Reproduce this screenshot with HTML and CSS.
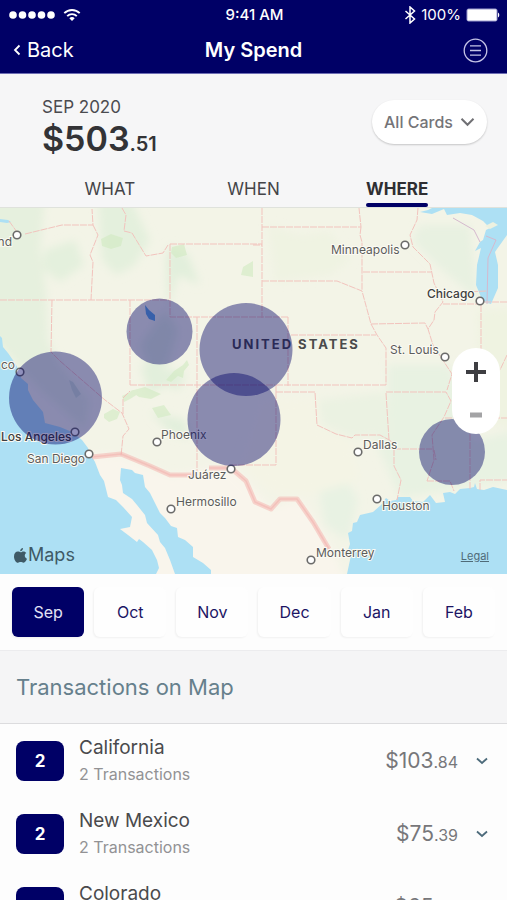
FILE: index.html
```html
<!DOCTYPE html>
<html lang="en">
<head>
<meta charset="utf-8">
<meta name="viewport" content="width=device-width, initial-scale=1">
<title>My Spend</title>
<link rel="stylesheet" href="styles.css">
</head>
<body>
<div class="app">
  <header class="top">
    <div class="status">
      <div class="status-left">
        <svg width="46" height="8" viewBox="0 0 46 8" aria-hidden="true"><g fill="#fff"><circle cx="4" cy="4" r="3.8"/><circle cx="13.500" cy="4" r="3.8"/><circle cx="23" cy="4" r="3.8"/><circle cx="32.500" cy="4" r="3.8"/><circle cx="42" cy="4" r="3.8"/></g></svg>
        <svg width="18" height="14" viewBox="0 0 18 14" aria-hidden="true"><g fill="none" stroke="#fff" stroke-width="1.9"><path d="M1.300 5.200a10.800 10.800 0 0 1 15.400 0"/><path d="M4.200 8.200a6.700 6.700 0 0 1 9.600 0"/></g><path d="M6.300 10.200a3.900 3.900 0 0 1 5.400 0L9 13z" fill="#fff"/></svg>
      </div>
      <span class="time">9:41 AM</span>
      <div class="status-right">
        <svg width="12" height="18" viewBox="0 0 12 18" aria-hidden="true"><path d="M1.500 5l9 8L6 17V1l4.500 4-9 8" fill="none" stroke="#fff" stroke-width="1.500"/></svg>
        <span>100%</span>
        <svg width="34" height="14" viewBox="0 0 34 14" aria-hidden="true"><rect x="1" y="1" width="30" height="12" rx="1.500" fill="#fff" stroke="#9c9cce" stroke-width="1"/><path d="M32 4.500a3 3 0 0 1 0 5z" fill="#fff"/></svg>
      </div>
    </div>
    <nav class="navbar">
      <button class="back" type="button"><svg width="8" height="12" viewBox="0 0 8 12" aria-hidden="true"><path d="M6.500 1.500L2 6l4.500 4.500" fill="none" stroke="#fff" stroke-width="1.800"/></svg>Back</button>
      <h1>My Spend</h1>
      <button class="menu" type="button" aria-label="Menu"><svg width="25" height="25" viewBox="0 0 25 25" aria-hidden="true"><g fill="none" stroke="#c4c3e6" stroke-width="1.300"><circle cx="12.500" cy="12.500" r="11.300"/><path d="M7 7.800h11M7 12.500h11M7 17.200h11"/></g></svg></button>
    </nav>
  </header>

  <section class="summary">
    <div class="summary-row">
      <div>
        <div class="period">SEP 2020</div>
        <div class="total">$503<small>.51</small></div>
      </div>
      <div class="cards">
        <select aria-label="Cards"><option>All Cards</option></select>
        <svg width="15" height="10" viewBox="0 0 15 10" aria-hidden="true"><path d="M1.500 1.800l6 6 6-6" fill="none" stroke="#707074" stroke-width="2"/></svg>
      </div>
    </div>
    <nav class="tabs">
      <button type="button">WHAT</button>
      <button type="button">WHEN</button>
      <button type="button" class="active">WHERE</button>
    </nav>
  </section>

  <section class="map">
    <svg class="map-art" viewBox="0 208 507 366" preserveAspectRatio="xMidYMid slice" role="img" aria-label="Map of spending">
      <defs>
        <filter id="soft" x="-20%" y="-20%" width="140%" height="140%"><feGaussianBlur stdDeviation="4"/></filter>
      </defs>
      <rect y="208" width="507" height="366" fill="#f3f4e7"/>
      <g filter="url(#soft)">
        <path d="M90 454L121 456L170 476L210 470L232 467L250 485L270 509L300 498L330 545L350 590H90z" fill="#f9f5ec"/>
        <path d="M-10 198H45L40 250L46 290L48 340L60 365L90 400L85 430L40 390L-10 335z" fill="#e6f0de"/>
        <path d="M45 250L75 240L84 265L60 282L42 268zM98 198H130L150 240L134 266L116 275L102 260L100 230z" fill="#e4f0dd"/>
        <path d="M170 245L188 255L200 285L178 275L168 310L166 260zM140 365L185 372L180 390L165 385L150 395zM150 412L185 420L190 438L172 434z" fill="#e2efdc"/>
        <path d="M268 225L300 235L330 232L350 260L330 275L275 282z" fill="#eff3e2"/>
        <path d="M420 225L470 225L478 300L440 268L412 240z" fill="#e8f1e1"/>
        <path d="M388 365L450 365L475 440L517 430V480L450 490L400 498L375 440L388 430z" fill="#e8f2e2"/>
        <path d="M318 400L385 392L390 435L350 437L322 425z" fill="#ebf2e2"/>
        <path d="M318 485L345 478L358 500L348 540L325 525z" fill="#e8f2e3"/>
        <path d="M140 345L165 310L178 330L168 365L150 370z" fill="#e1eedb"/>
        <path d="M478 310L517 308V430L480 420z" fill="#eff3e1"/>
        <path d="M262 400L317 398L317 425L350 438L360 480L310 495L275 495L240 465z" fill="#f4f4e5"/>
      </g>
      <g fill="#d3ebc4" opacity=".65">
        <path d="M101 239l10-5 12 4-2 8-10 3-9-3z"/><path d="M172 247l12-3 3 11-11 3-5-5z"/><path d="M243 267l10-6v16l-12-2z"/>
        <path d="M104 414l9-5 7 3-3 7-8 3-5-4z"/><path d="M122 396l12-6 4 4-8 5-6 3z"/><path d="M166 380l8-9 9-6 4-5 2 5-5 6-1 7-5-2-7 6z"/><path d="M152 408l12-3 7 10-13 3z"/><path d="M130 391l15-4 16 7-10 5-12-2z"/>
      </g>
      <g fill="#ade0f4">
        <path d="M0 336L2 338L3 347L8 353L15 363L20 372L21 378L28 384L28 390L33 400L43 412L45 423L60 427L72 432L82 440L88 448L91 455L95 462L100 475L104 481L108 497L116 500L123 507L132 517L130 527L120 529L128 535L137 542L139 539L143 542L152 550L157 560L159 568L156 574H0z"/>
        <path d="M121 468L132 470L135 473L143 475L145 487L150 493L155 503L160 513L165 518L171 526L177 528L178 537L185 540L193 547L193 557L203 563L211 570V574H175L170 560L165 548L160 542L158 535L147 523L145 515L137 505L132 499L123 493L122 485L120 480z"/>
        <path d="M347 574L350 560L352 552L348 550L350 544L348 533L352 531L353 523L357 522L360 515L373 512L381 505L386 498L390 501L396 500L398 497L410 497L413 501L423 502L430 495L436 503L445 502L443 493L450 492L455 494L460 489L470 488L474 487L475 483L477 489L484 490L493 487L507 490V574z"/>
        <path d="M420 212L428 210L432 208H507V235L497 249L495 252L498 265L498 288L491 304L483 302L476 285L477 265L481 248L475 251L480 242L483 240L486 230L490 228L483 221L472 215L460 213L447 215L444 209L432 214z"/>
        <path d="M0 219l8 1 3 2-4 1-7-1z"/>
      </g>
      <path d="M145 305l4 5 6 5v6l-6-2-3-5z" fill="#63aade"/>
      <path d="M69 380l4 2 8 12-5 4-4-8z" fill="#cfe0d2"/>
      <path d="M485 226l8-4 5 3-8 4z" fill="#edf1e0"/>
      <path d="M453 218L474 230L480 242M486 236L496 240L488 258L487 304" fill="none" stroke="#d5b9ce" stroke-width="1"/>
      <g fill="none" stroke="#f2c3bd" stroke-width="1" stroke-dasharray="7 1">
        <path d="M9 221L17 232M25 234L62 225H93L92 209M93 225L98 235L90 255L93 262L91 300M0 300H169M52 300L51 352L60 361L105 400L122 413L129 429L123 436L121 456M130 300V385M123 414V398L130 391"/>
        <path d="M122 208L126 215L124 231L132 233L146 256L163 253L168 245M170 244H262M170 244V317H288M197 317V472M130 385H275M262 208V318M253 245H262"/>
        <path d="M262 227H361L359 208M361 227L360 235L362 242V290M262 281H337L362 291L371 324L377 335L386 348V385M363 272H431M418 208L417 220L410 235L413 247L430 264L434 283L443 302L435 312L434 320L428 329L433 345L452 374L447 390M371 324L425 323L428 329M288 317V386M291 335H376M276 385H386M386 393L389 440L394 444M276 392H315L317 425L336 434L352 438L355 435L380 435L391 441M276 392V465H232M386 392H446L451 401L444 417L432 435L434 460L427 481M394 449H432M394 449V466L401 480L397 500M427 481H450L454 491M481 305V415M443 304H481M484 302H507M507 355L500 370M470 418V489M445 418H507M480 490V480H507M463 292L487 291M276 385V392M434 450L436 460"/>
      </g>
      <g fill="none" stroke="#f3a8a4" stroke-linejoin="round">
        <path d="M92 457L121 454L150 466L170 475H197M209 468H231L246 481L255 502L271 509L280 499H297L313 522L329 549" stroke-width="5" opacity=".45"/>
        <path d="M92 457L121 454L150 466L170 475H197M209 468H231L246 481L255 502L271 509L280 499H297L313 522L329 549" stroke-width="1.500" opacity=".4"/>
      </g>
      <g fill="#fff" stroke="#6b6b6a" stroke-width="1.600">
        <circle cx="17" cy="235" r="3.800"/><circle cx="20" cy="372" r="3.800"/><circle cx="75" cy="432" r="3.800"/><circle cx="89" cy="454" r="3.800"/><circle cx="157" cy="442" r="3.800"/><circle cx="231" cy="469" r="3.800"/><circle cx="171" cy="509" r="3.800"/><circle cx="358" cy="452" r="3.800"/><circle cx="377" cy="499" r="3.800"/><circle cx="311" cy="560" r="3.800"/><circle cx="405" cy="245" r="3.800"/><circle cx="480" cy="301" r="3.800"/><circle cx="445" cy="357" r="3.800"/>
      </g>
      <g class="city">
        <text x="12" y="246" text-anchor="end">nd</text>
        <text x="15" y="369" text-anchor="end">co</text>
        <text class="major" x="1" y="441">Los Angeles</text>
        <text x="27" y="463">San Diego</text>
        <text x="161" y="439">Phoenix</text>
        <text x="188" y="479">Juárez</text>
        <text x="176" y="506">Hermosillo</text>
        <text x="363" y="449">Dallas</text>
        <text x="382" y="510">Houston</text>
        <text x="316" y="557">Monterrey</text>
        <text x="331" y="254">Minneapolis</text>
        <text class="major" x="427" y="298">Chicago</text>
        <text x="390" y="354">St. Louis</text>
      </g>
      <text class="country" x="232" y="349">UNITED STATES</text>
      <g fill="#000066" fill-opacity=".43">
        <circle cx="55.500" cy="398" r="46.500"/><circle cx="159.500" cy="331.500" r="33"/><circle cx="246" cy="349.500" r="46.500"/><circle cx="234" cy="419.500" r="46.500"/><circle cx="452" cy="452" r="33"/>
      </g>
    </svg>
    <div class="zoom">
      <button type="button" aria-label="Zoom in"><svg width="20" height="20" viewBox="0 0 20 20" aria-hidden="true"><path d="M10 0v20M0 10h20" stroke="#3e3e42" stroke-width="4"/></svg></button>
      <button type="button" aria-label="Zoom out"><svg width="12" height="6" viewBox="0 0 12 6" aria-hidden="true"><path d="M0 3h12" stroke="#a3a3a5" stroke-width="5"/></svg></button>
    </div>
    <div class="brand"><svg width="13" height="15" viewBox="0 0 13 15" aria-hidden="true"><path d="M9 0c.1 1.800-1.200 3.300-2.800 3.300C6 1.600 7.500.200 9 0zM6.600 4.300c.7 0 1.500-.8 2.800-.8 1.300 0 2.300.7 2.900 1.500-2.300 1.400-1.900 4.700.7 5.700-.5 1.400-1.900 4-3.500 4.100-1.100 0-1.500-.7-2.800-.7s-1.700.7-2.800.7C2 14.800 0 11.500 0 8.400c0-3.100 1.900-4.800 3.800-4.800 1.300 0 2.100.7 2.800.7z" fill="#3f5a66"/></svg>Maps</div>
    <a class="legal" href="#legal">Legal</a>
  </section>

  <nav class="months">
    <button type="button" class="active">Sep</button>
    <button type="button">Oct</button>
    <button type="button">Nov</button>
    <button type="button">Dec</button>
    <button type="button">Jan</button>
    <button type="button">Feb</button>
  </nav>

  <h2>Transactions on Map</h2>

  <ul class="list">
    <li>
      <span class="count">2</span>
      <div class="place"><strong>California</strong><span>2 Transactions</span></div>
      <span class="amount">$103<small>.84</small></span>
      <button type="button" aria-label="Show California"><svg width="12" height="8" viewBox="0 0 12 8" aria-hidden="true"><path d="M1 1.500l5 4.500 5-4.500" fill="none" stroke="#4d6b7b" stroke-width="1.800"/></svg></button>
    </li>
    <li>
      <span class="count">2</span>
      <div class="place"><strong>New Mexico</strong><span>2 Transactions</span></div>
      <span class="amount">$75<small>.39</small></span>
      <button type="button" aria-label="Show New Mexico"><svg width="12" height="8" viewBox="0 0 12 8" aria-hidden="true"><path d="M1 1.500l5 4.500 5-4.500" fill="none" stroke="#4d6b7b" stroke-width="1.800"/></svg></button>
    </li>
    <li>
      <span class="count">2</span>
      <div class="place"><strong>Colorado</strong><span>2 Transactions</span></div>
      <span class="amount">$65<small>.00</small></span>
      <button type="button" aria-label="Show Colorado"><svg width="12" height="8" viewBox="0 0 12 8" aria-hidden="true"><path d="M1 1.500l5 4.500 5-4.500" fill="none" stroke="#4d6b7b" stroke-width="1.800"/></svg></button>
    </li>
  </ul>
</div>
</body>
</html>
```
FILE: styles.css
```css
* { box-sizing: border-box; }
body {
  margin: 0;
  font-family: Inter, "Liberation Sans", sans-serif;
  color: #333336;
  background: #fdfdfd;
}
button, select {
  font: inherit;
  color: inherit;
  border: 0;
  background: none;
  padding: 0;
  margin: 0;
}
svg { display: block; flex: none; }
small { font-weight: inherit; }

.app { display: flex; flex-direction: column; height: 100vh; overflow: hidden; }
.app > * { flex: none; }

/* Header */
.top { background: #000066; color: #fff; border-bottom: 1px solid #6d6db4; }
.status {
  display: grid;
  grid-template-columns: 1fr auto 1fr;
  align-items: center;
  height: 28px;
  padding: 1px 7px 0 9px;
  font-size: 15px;
}
.status-left, .status-right { display: flex; align-items: center; gap: 8px; }
.status-right { justify-content: flex-end; gap: 5px; }
.time { font-weight: 500; }
.navbar {
  display: grid;
  grid-template-columns: 1fr auto 1fr;
  align-items: center;
  height: 45px;
  padding: 0 13px 1px;
  font-size: 20px;
}
.back { justify-self: start; display: flex; align-items: center; gap: 6px; }
.menu { justify-self: end; margin-right: 6px; }
h1 { margin: 0; font-size: 20px; font-weight: 600; line-height: 24px; }

/* Summary */
.summary { background: #f6f6f7; border-bottom: 1px solid #dfe2dc; }
.summary-row {
  display: flex;
  justify-content: space-between;
  align-items: flex-start;
  height: 97px;
  padding: 22px 20px 0 42px;
}
.period { font-size: 17px; line-height: 22px; color: #4b4b4f; }
.total { font-size: 34px; font-weight: 600; line-height: 42px; }
.total small { font-size: 20px; }
.cards {
  display: flex;
  align-items: center;
  height: 44px;
  margin-top: 4px;
  padding: 0 12px;
  border-radius: 22px;
  background: #fff;
  box-shadow: 0 1px 2px rgba(0, 0, 0, .2);
}
.cards select {
  appearance: none;
  font-size: 16px;
  font-weight: 500;
  color: #747478;
  padding-right: 22px;
  margin-right: -15px;
}
.cards svg { pointer-events: none; }
.tabs {
  display: grid;
  grid-template-columns: repeat(3, 1fr);
  justify-items: center;
  padding: 0 38px;
  font-size: 17px;
  color: #444448;
}
.tabs button {
  display: flex;
  flex-direction: column;
  justify-content: flex-end;
  height: 36px;
  line-height: 28px;
}
.tabs button::after { content: ""; height: 4px; border-radius: 2px; }
.tabs .active { font-weight: 700; color: #2e2e32; }
.tabs .active::after { background: #000066; }

/* Map */
.map { position: relative; }
.map-art { width: 100%; height: 366px; }
.city text {
  font-size: 12px;
  fill: #5c5c5b;
  stroke: #fbfaf3;
  stroke-width: 2px;
  paint-order: stroke;
}
.city .major { font-weight: 500; fill: #3e3e40; }
.country { font-size: 13px; font-weight: 700; letter-spacing: 2px; fill: #4a4a4b; }
.zoom {
  position: absolute;
  top: 140px;
  right: 7px;
  width: 48px;
  border-radius: 24px;
  background: #fff;
}
.zoom button { display: grid; place-items: center; width: 100%; height: 43px; }
.zoom button:first-child { padding-top: 5px; }
.zoom button:last-child { padding-top: 4px; }
.brand {
  position: absolute;
  left: 14px;
  bottom: 7px;
  display: flex;
  align-items: center;
  gap: 1px;
  font-size: 18px;
  line-height: 24px;
  color: #3f5a66;
}
.legal { position: absolute; right: 18px; bottom: 11px; font-size: 11px; color: #4f6b78; }

/* Month picker */
.months {
  display: grid;
  grid-template-columns: repeat(6, 1fr);
  gap: 10px;
  padding: 13px 12px;
  border-bottom: 1px solid #ececee;
}
.months button {
  height: 50px;
  border-radius: 6px;
  font-size: 16px;
  color: #1c1464;
  background: #fefefe;
  box-shadow: -1px 1px 2px rgba(0, 0, 0, .05);
}
.months .active { background: #000066; color: #e3e3f5; }

h2 {
  margin: 0;
  padding: 22px 16px;
  font-size: 22px;
  font-weight: 400;
  line-height: 28px;
  color: #66808c;
  background: #f5f5f6;
  border-bottom: 1px solid #dcdcde;
}

/* Transactions */
.list { list-style: none; margin: 0; padding: 0; }
.list li { display: flex; align-items: center; height: 73px; padding: 0 19px 0 16px; }
.count {
  width: 48px;
  height: 40px;
  margin-right: 15px;
  border-radius: 8px;
  background: #000066;
  color: #fff;
  font-size: 17px;
  font-weight: 700;
  line-height: 40px;
  text-align: center;
}
.place { flex: 1; }
.place strong { display: block; font-size: 19px; font-weight: 400; line-height: 26px; color: #4a4a4c; }
.place span { display: block; font-size: 16px; line-height: 26px; color: #929294; }
.amount { margin-right: 18px; font-size: 21px; color: #77777a; }
.amount small { font-size: 16px; }
```
